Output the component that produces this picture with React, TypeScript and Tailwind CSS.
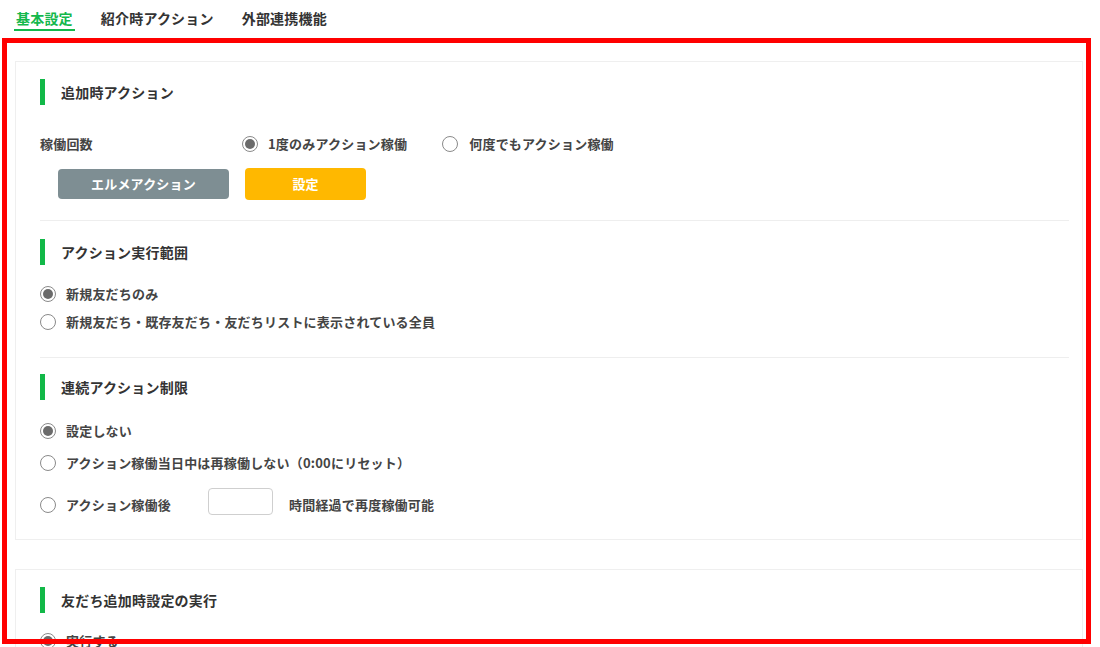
import React from "react";

const font = { fontFamily: '"Noto Sans CJK JP", "Noto Sans", sans-serif' };

function Radio({ checked }: { checked?: boolean }) {
  return (
    <span className="flex h-[16px] w-[16px] shrink-0 items-center justify-center rounded-full border border-[#8a8a8a] bg-white">
      {checked && <span className="h-[10px] w-[10px] rounded-full bg-[#6b6b6b]" />}
    </span>
  );
}

function Heading({ children }: { children: React.ReactNode }) {
  return (
    <div className="flex h-[26px] items-center">
      <span className="h-[26px] w-[5px] bg-[#12b848]" />
      <span className="ml-[16px] text-[14px] font-bold tracking-[0.2px] text-[#333333]">{children}</span>
    </div>
  );
}

function RadioRow({ checked, label, className }: { checked?: boolean; label: string; className?: string }) {
  return (
    <div className={"flex h-[20px] items-center " + (className ?? "")}>
      <Radio checked={checked} />
      <span className="ml-[10px] text-[13px] font-bold tracking-[0.2px] text-[#444444]">{label}</span>
    </div>
  );
}

export default function App() {
  return (
    <div className="relative h-[647px] w-[1100px] overflow-hidden bg-white" style={font}>
      {/* Tabs */}
      <div className="flex h-[31px] items-end pl-[14px]">
        <div className="flex h-[31px] flex-col justify-between">
          <span className="px-[2px] pt-[8px] text-[14px] font-bold leading-[20px] tracking-[0.2px] text-[#14b84c]">基本設定</span>
          <span className="h-[2px] w-full bg-[#14b84c]" />
        </div>
        <div className="ml-[24px] flex h-[31px] flex-col justify-between">
          <span className="px-[2px] pt-[8px] text-[14px] font-bold leading-[20px] tracking-[0.2px] text-[#333333]">紹介時アクション</span>
          <span className="h-[2px]" />
        </div>
        <div className="ml-[24px] flex h-[31px] flex-col justify-between">
          <span className="px-[2px] pt-[8px] text-[14px] font-bold leading-[20px] tracking-[0.2px] text-[#333333]">外部連携機能</span>
          <span className="h-[2px]" />
        </div>
      </div>

      <div className="pl-[15px] pr-[17px]">
        {/* Card 1 */}
        <div className="mt-[30px] border border-[#efefef] pb-[24px] pl-[24px] pr-[13px] pt-[17px]">
          <Heading>追加時アクション</Heading>
          <div className="mt-[29px] flex h-[20px] items-center">
            <span className="w-[202px] text-[13px] font-bold tracking-[0.2px] text-[#444444]">稼働回数</span>
            <Radio checked />
            <span className="ml-[10px] text-[13px] font-bold tracking-[0.2px] text-[#444444]">1度のみアクション稼働</span>
            <span className="ml-[35px]">
              <Radio />
            </span>
            <span className="ml-[11px] text-[13px] font-bold tracking-[0.2px] text-[#444444]">何度でもアクション稼働</span>
          </div>
          <div className="mt-[14px] flex h-[32px] items-center pl-[18px]">
            <button className="h-[30px] w-[171px] rounded-[4px] bg-[#7e8e93] text-[13px] font-bold tracking-[0.2px] text-white">
              エルメアクション
            </button>
            <button className="ml-[16px] h-[32px] w-[121px] rounded-[4px] bg-[#ffb800] text-[13px] font-bold text-white">
              設定
            </button>
          </div>
          <div className="mt-[20px] h-px bg-[#eeeeee]" />

          <div className="mt-[18px]">
            <Heading>アクション実行範囲</Heading>
          </div>
          <RadioRow className="mt-[19px]" checked label="新規友だちのみ" />
          <RadioRow className="mt-[8px]" label="新規友だち・既存友だち・友だちリストに表示されている全員" />
          <div className="mt-[25px] h-px bg-[#eeeeee]" />

          <div className="mt-[16px]">
            <Heading>連続アクション制限</Heading>
          </div>
          <RadioRow className="mt-[21px]" checked label="設定しない" />
          <RadioRow className="mt-[12px]" label="アクション稼働当日中は再稼働しない（0:00にリセット）" />
          <div className="mt-[15px] flex h-[27px] items-start">
            <span className="mt-[9px]">
              <Radio />
            </span>
            <span className="ml-[10px] mt-[7px] w-[142px] text-[13px] font-bold tracking-[0.2px] text-[#444444]">アクション稼働後</span>
            <input className="h-[27px] w-[65px] rounded-[4px] border border-[#cfcfcf] bg-white" />
            <span className="ml-[16px] mt-[7px] text-[13px] font-bold tracking-[0.2px] text-[#444444]">時間経過で再度稼働可能</span>
          </div>
        </div>

        {/* Card 2 */}
        <div className="mt-[29px] border border-[#efefef] pb-[24px] pl-[24px] pr-[13px] pt-[17px]">
          <Heading>友だち追加時設定の実行</Heading>
          <RadioRow className="mt-[18px]" checked label="実行する" />
        </div>
      </div>

      {/* Red annotation frame */}
      <div className="pointer-events-none absolute left-[2px] top-[38px] h-[606px] w-[1089px] border-[5px] border-[#ff0000]" />
    </div>
  );
}
